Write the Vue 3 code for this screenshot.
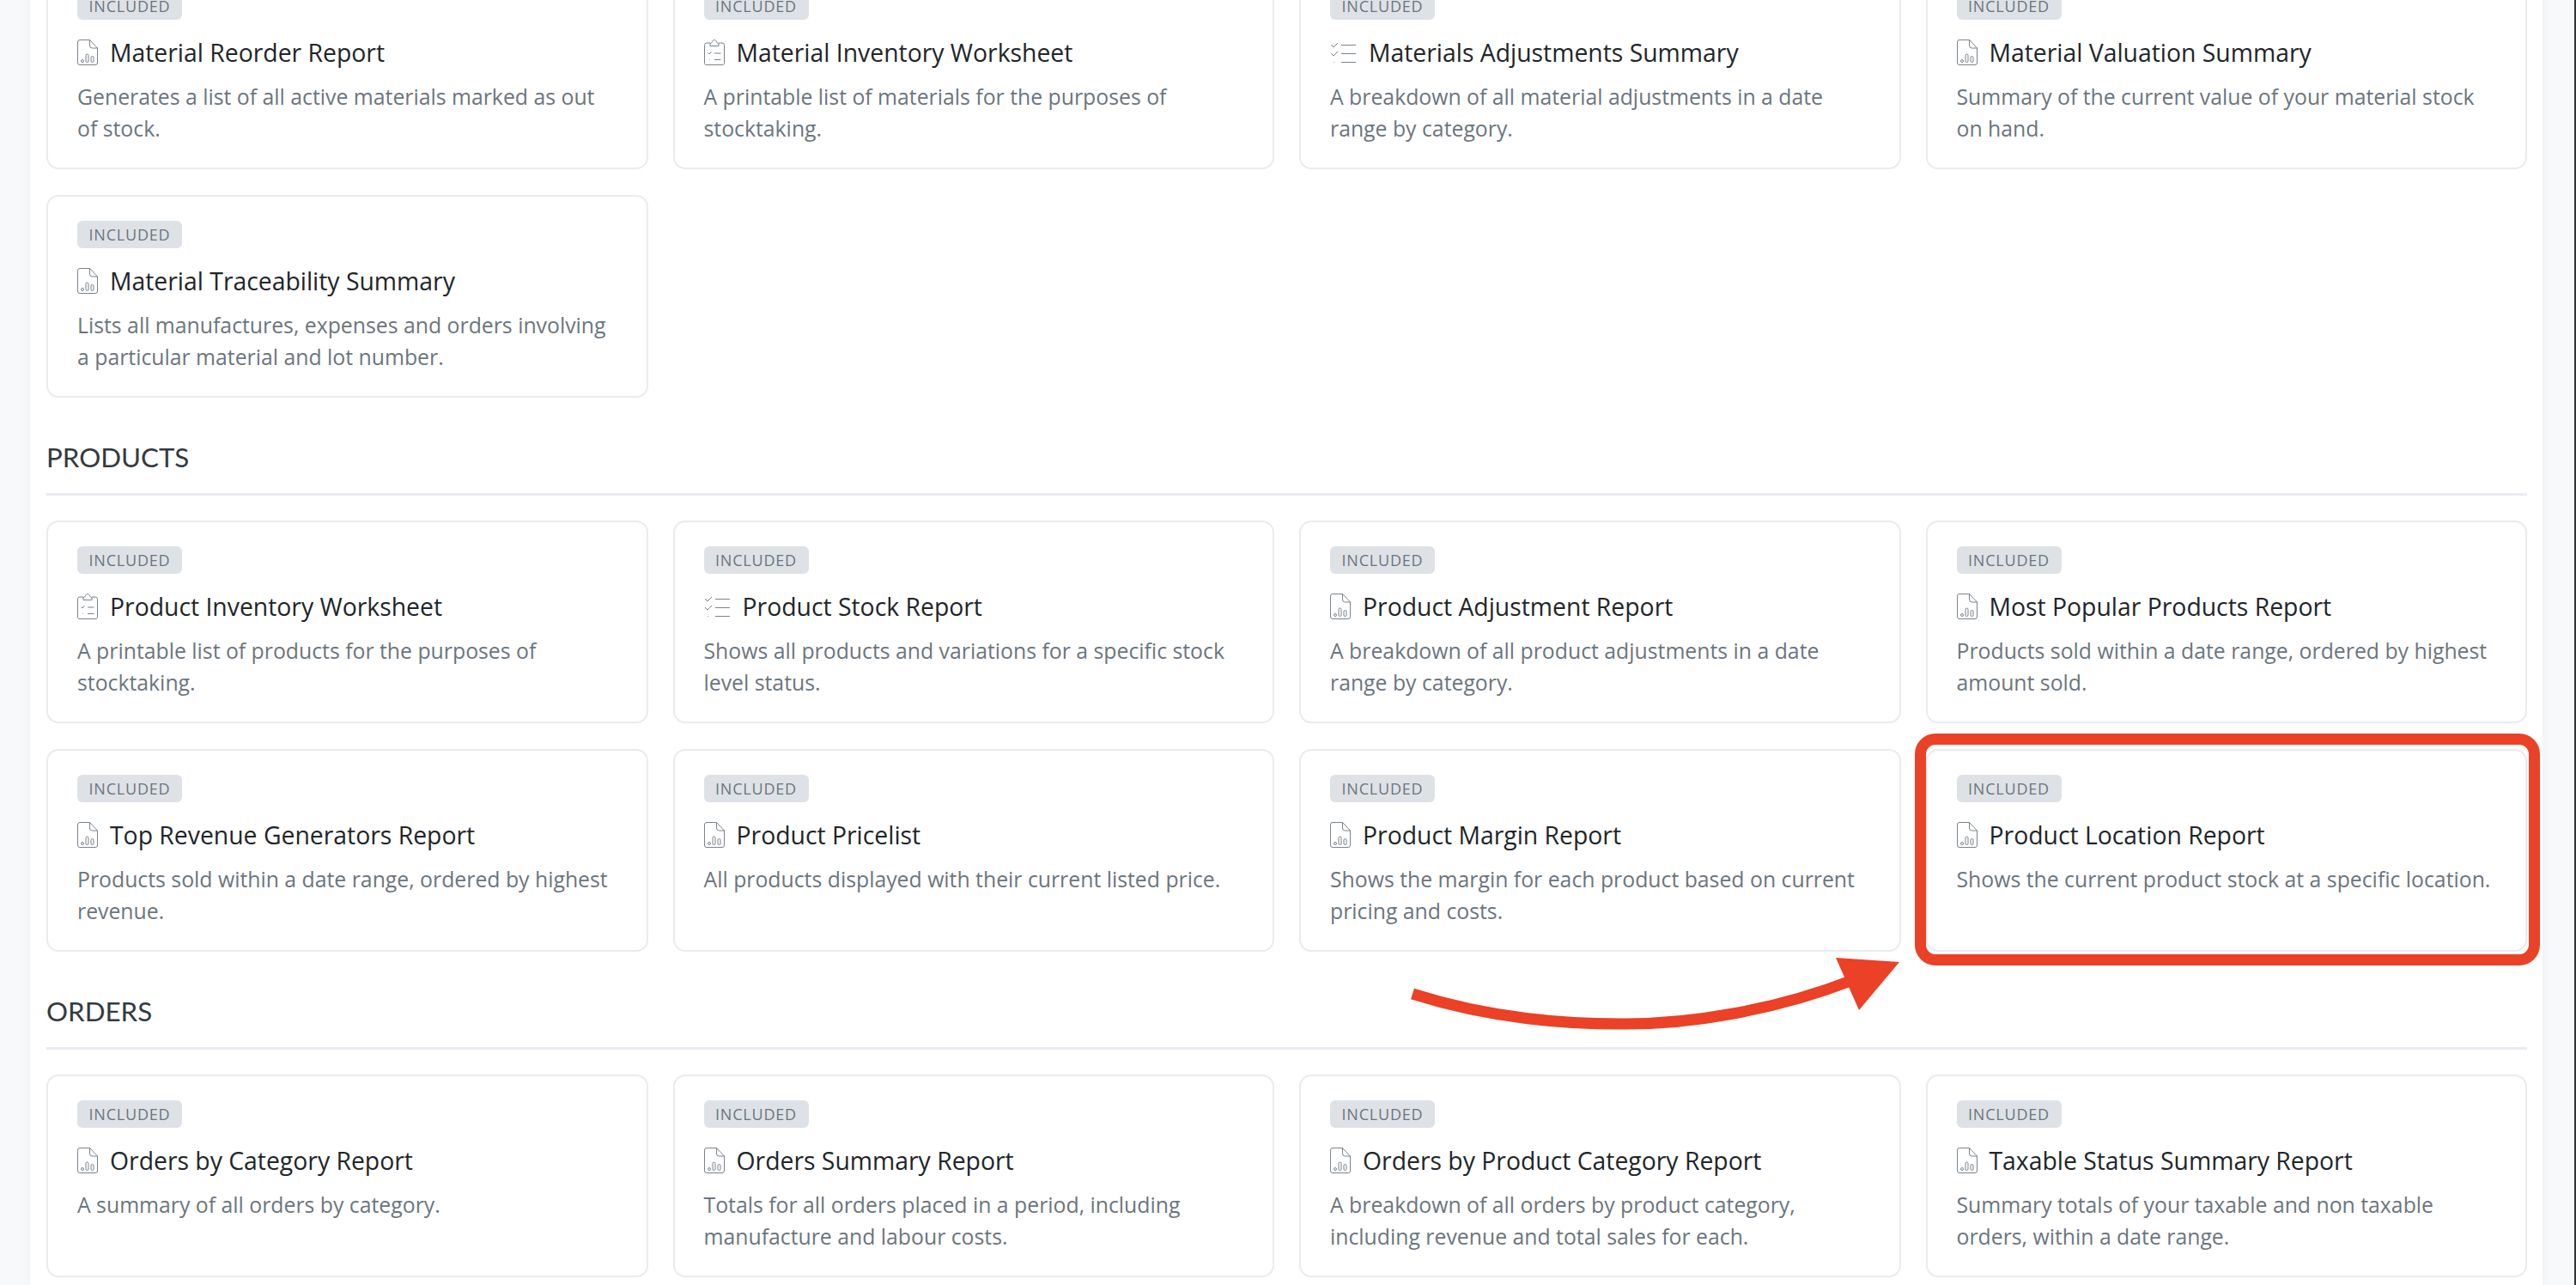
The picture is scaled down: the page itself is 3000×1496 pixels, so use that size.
<script setup>
const sections = [
  {
    title: '',
    cards: [
      { icon: 'doc', title: 'Material Reorder Report', desc: 'Generates a list of all active materials marked as out of stock.' },
      { icon: 'clip', title: 'Material Inventory Worksheet', desc: 'A printable list of materials for the purposes of stocktaking.' },
      { icon: 'list', title: 'Materials Adjustments Summary', desc: 'A breakdown of all material adjustments in a date range by category.' },
      { icon: 'doc', title: 'Material Valuation Summary', desc: 'Summary of the current value of your material stock on hand.' },
      { icon: 'doc', title: 'Material Traceability Summary', desc: 'Lists all manufactures, expenses and orders involving a particular material and lot number.' },
    ],
  },
  {
    title: 'PRODUCTS',
    cards: [
      { icon: 'clip', title: 'Product Inventory Worksheet', desc: 'A printable list of products for the purposes of stocktaking.' },
      { icon: 'list', title: 'Product Stock Report', desc: 'Shows all products and variations for a specific stock level status.' },
      { icon: 'doc', title: 'Product Adjustment Report', desc: 'A breakdown of all product adjustments in a date range by category.' },
      { icon: 'doc', title: 'Most Popular Products Report', desc: 'Products sold within a date range, ordered by highest amount sold.' },
      { icon: 'doc', title: 'Top Revenue Generators Report', desc: 'Products sold within a date range, ordered by highest revenue.' },
      { icon: 'doc', title: 'Product Pricelist', desc: 'All products displayed with their current listed price.' },
      { icon: 'doc', title: 'Product Margin Report', desc: 'Shows the margin for each product based on current pricing and costs.' },
      { icon: 'doc', title: 'Product Location Report', desc: 'Shows the current product stock at a specific location.' },
    ],
  },
  {
    title: 'ORDERS',
    cards: [
      { icon: 'doc', title: 'Orders by Category Report', desc: 'A summary of all orders by category.' },
      { icon: 'doc', title: 'Orders Summary Report', desc: 'Totals for all orders placed in a period, including manufacture and labour costs.' },
      { icon: 'doc', title: 'Orders by Product Category Report', desc: 'A breakdown of all orders by product category, including revenue and total sales for each.' },
      { icon: 'doc', title: 'Taxable Status Summary Report', desc: 'Summary totals of your taxable and non taxable orders, within a date range.' },
    ],
  },
]
</script>

<template>
  <div class="page">
    <main class="panel">
      <section v-for="(s, i) in sections" :key="i" class="section">
        <h2 v-if="s.title" class="heading">{{ s.title }}</h2>
        <div class="grid">
          <article v-for="c in s.cards" :key="c.title" class="card">
            <span class="badge">INCLUDED</span>
            <div class="title-row">
              <svg v-if="c.icon === 'doc'" class="icon" viewBox="0 0 24 30" fill="none" stroke="#6c757d" stroke-width="0.9">
                <path d="M3 .5h11.5L23.5 10v17a2.500 2.500 0 0 1-2.500 2.500H3A2.500 2.500 0 0 1 .5 27V3A2.500 2.500 0 0 1 3 .5z" />
                <path d="M14.500.5V7a3 3 0 0 0 3 3h6" />
                <circle cx="6" cy="25" r="1.500" />
                <rect x="10" y="17" width="3" height="9.500" rx="1.500" />
                <rect x="16" y="19.500" width="3" height="7" rx="1.500" />
              </svg>
              <svg v-else-if="c.icon === 'clip'" class="icon" viewBox="0 0 24 30" fill="none" stroke="#6c757d" stroke-width="0.9">
                <path d="M7 4H3A2.500 2.500 0 0 0 .5 6.500v21A2 2 0 0 0 3 29.500h18a2 2 0 0 0 2.500-2v-21A2.500 2.500 0 0 0 21 4h-4" />
                <path d="M7 7.500V4.500c1.500 0 2-.8 2.500-2C10 1.200 11 .5 12 .5s2 .7 2.500 2c.5 1.200 1 2 2.500 2v3z" />
                <path d="M4.500 15.500l1.500 1.500 2.500-3M12 16h7.500M6 23.500h.6M12 23.500h7.500" />
              </svg>
              <svg v-else class="icon wide" viewBox="0 0 31 25" fill="none" stroke="#6c757d" stroke-width="0.9">
                <path d="M1 3l3 3 5-5M1 13l3 3 5-5M4 23.500h.8M13 3.500h17M13 13.500h17M13 23.500h17" />
              </svg>
              <h3 class="title">{{ c.title }}</h3>
            </div>
            <p class="desc">{{ c.desc }}</p>
          </article>
        </div>
      </section>
    </main>
    <div class="highlight"></div>
    <svg class="arrow" viewBox="0 0 580 80" fill="none">
      <path d="M5 47C90 74 170 82 246 82C330 83 430 65 515 32" stroke="#ea4127" stroke-width="13" />
      <polygon points="498,5 572,10 525,66" fill="#ea4127" />
    </svg>
  </div>
</template>

<style scoped>
.page {
  position: relative;
  width: 3000px;
  height: 1496px;
  overflow: hidden;
  box-sizing: border-box;
  border-right: 2px solid #343434;
  background: #f8f9fa;
  font-family: "Open Sans", "Liberation Sans", sans-serif;
}
.panel {
  margin: -39px 37px 0 35px;
  height: 1536px;
  padding: 0 18px 0 19px;
  background: #fff;
  box-sizing: border-box;
  display: flex;
  flex-direction: column;
  gap: 49px;
  box-shadow: 0 0 12px rgba(0, 0, 0, 0.05);
}
.heading {
  margin: 0 0 29px;
  padding-bottom: 22px;
  border-bottom: 3px solid #eaeaf0;
  font-family: "Lato", "Liberation Sans", sans-serif;
  font-size: 31.3px;
  line-height: 40px;
  font-weight: 400;
  color: #343a40;
}
.grid {
  display: grid;
  grid-template-columns: repeat(4, minmax(0, 1fr));
  grid-auto-rows: 236px;
  column-gap: 29px;
  row-gap: 30px;
}
.card {
  box-sizing: border-box;
  border: 2px solid #e9ecef;
  border-radius: 14px;
  padding: 28px 34px 0;
  background: #fff;
}
.badge {
  display: block;
  width: 122px;
  height: 32px;
  background: #dee2e6;
  border-radius: 6px;
  color: #6c757d;
  font-size: 18px;
  line-height: 32px;
  letter-spacing: 0.8px;
  text-align: center;
}
.title-row {
  display: flex;
  align-items: center;
  gap: 14px;
  height: 30px;
  margin-top: 23px;
}
.icon {
  width: 24px;
  height: 30px;
  flex: none;
}
.icon.wide {
  width: 31px;
  height: 25px;
}
.title {
  margin: 0;
  font-size: 28.35px;
  line-height: 30px;
  font-weight: 400;
  color: #212529;
}
.desc {
  margin: 18px 0 0;
  font-size: 24.8px;
  line-height: 37px;
  color: #6c757d;
}
.highlight {
  position: absolute;
  left: 2230px;
  top: 854px;
  width: 728px;
  height: 270px;
  box-sizing: border-box;
  border: 13.500px solid #ea4127;
  border-radius: 24px;
}
.arrow {
  position: absolute;
  left: 1640px;
  top: 1110px;
  width: 580px;
  height: 80px;
  overflow: visible;
}
</style>
